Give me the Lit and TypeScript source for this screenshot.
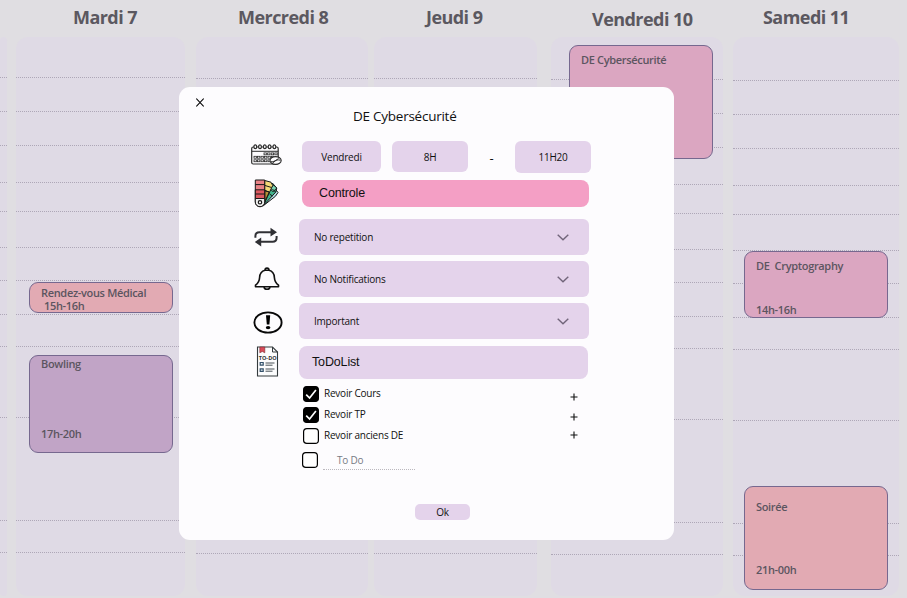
import { LitElement, html, css, svg } from "lit";
import { customElement, property } from "lit/decorators.js";
import { classMap } from "lit/directives/class-map.js";
import { styleMap } from "lit/directives/style-map.js";

interface CalEvent {
  title: string;
  hours: string;
  tone: string;
  left: number;
  top: number;
  height: number;
  titleGap: number;
  hoursGap: number;
  indent?: number;
}

interface Day {
  name: string;
  width: number;
  gap: number;
  shift: number;
  drop: number;
  offset: number;
  events: CalEvent[];
}

const LINES = [77, 111, 145, 182, 211, 247, 280, 314, 346, 417, 520, 552];

const DAYS: Day[] = [
  { name: "", width: 7, gap: 9, shift: 0, drop: 0, offset: 0, events: [] },
  {
    name: "Mardi 7", width: 169, gap: 11, shift: 57, drop: 0, offset: 0,
    events: [
      { title: "Rendez-vous Médical", hours: "15h-16h", tone: "rose", left: 13, top: 282, height: 31, titleGap: 3, hoursGap: 0, indent: 3 },
      { title: "Bowling", hours: "17h-20h", tone: "violet", left: 13, top: 355, height: 98, titleGap: 1, hoursGap: 57 },
    ],
  },
  { name: "Mercredi 8", width: 172, gap: 6, shift: 42, drop: 0, offset: 1, events: [] },
  { name: "Jeudi 9", width: 163, gap: 14, shift: 52, drop: 0, offset: 1, events: [] },
  {
    name: "Vendredi 10", width: 172, gap: 10, shift: 41, drop: 2, offset: 2,
    events: [{ title: "DE Cybersécurité", hours: "", tone: "pink", left: 18, top: 45, height: 114, titleGap: 7, hoursGap: 0 }],
  },
  {
    name: "Samedi 11", width: 166, gap: 8, shift: 30, drop: 0, offset: 3,
    events: [
      { title: "DE  Cryptography", hours: "14h-16h", tone: "pink", left: 11, top: 251, height: 67, titleGap: 7, hoursGap: 31 },
      { title: "Soirée", hours: "21h-00h", tone: "rose", left: 11, top: 486, height: 104, titleGap: 13, hoursGap: 50 },
    ],
  },
];

@customElement("day-column")
class DayColumn extends LitElement {
  @property({ attribute: false }) day!: Day;

  static styles = css`
    :host { display: block; flex: none; position: relative; height: 598px; }
    .name {
      height: 37px; box-sizing: border-box; white-space: nowrap;
      font: 700 18px/24px "Open Sans", sans-serif; letter-spacing: -.55px; color: #5b5860;
    }
    .track { height: 559px; border-radius: 12px; background: #dfdae5; overflow: hidden; }
    .slot { box-sizing: border-box; border-bottom: 1px dotted #aea7b7; }
    .event {
      position: absolute; box-sizing: border-box; width: 144px; display: flex; flex-direction: column;
      border: 1px solid #76688f; border-radius: 9px; padding-left: 11px;
      font: 600 11px/13px "Open Sans", sans-serif; letter-spacing: -.33px; color: #5b5560;
    }
    .line { white-space: pre; }
    .rose { background: #e2aab3; }
    .violet { background: #c1a4c6; }
    .pink { background: #dba6c1; }
  `;

  render() {
    const d = this.day;
    let prev = 37;
    return html`
      <div class="name" style=${styleMap({ paddingLeft: d.shift + "px", paddingTop: 5 + d.drop + "px" })}>${d.name}</div>
      <div class="track">
        ${LINES.map((y) => {
          const bottom = y + d.offset + 1;
          const h = bottom - prev;
          prev = bottom;
          return html`<div class="slot" style=${styleMap({ height: h + "px" })}></div>`;
        })}
      </div>
      ${d.events.map((e) => html`
        <div class=${classMap({ event: true, [e.tone]: true })}
          style=${styleMap({ top: e.top + "px", height: e.height + "px", left: e.left + "px" })}>
          <div class="line" style=${styleMap({ marginTop: e.titleGap + "px" })}>${e.title}</div>
          <div class="line" style=${styleMap({ marginTop: e.hoursGap + "px", paddingLeft: (e.indent ?? 0) + "px" })}>${e.hours}</div>
        </div>`)}
    `;
  }
}

const chevron = html`<svg class="chevron" width="12" height="7" viewBox="0 0 12 7"><path d="M.7.8 6 5.8 11.3.8" fill="none" stroke="#71657a" stroke-width="1.4"/></svg>`;

const calendarIcon = html`<svg width="32" height="22" viewBox="0 0 32 22" fill="none" stroke="#2c2c2c">
  <rect x="0.700" y="3" width="26.500" height="17" rx="1.500" stroke-width="1.200"/>
  <path d="M1 7.300H27" stroke-width="1"/>
  ${[4.3, 9, 13.8, 18.6, 23.4].map((x) => svg`<ellipse cx=${x} cy="2.700" rx="1.400" ry="1.900" fill="#fdfcfe" stroke-width="1.200"/>`)}
  ${[13, 16.6, 20.2, 23.8].map((x) => svg`<rect x=${x} y="8.900" width="2.400" height="1.900" stroke-width=".8"/>`)}
  ${[3, 6.5, 10, 13.5, 17, 20.5].map((x) => svg`<rect x=${x} y="12.300" width="2.400" height="1.900" stroke-width=".8"/>`)}
  ${[3, 6.5, 10, 13.5, 17].map((x) => svg`<rect x=${x} y="15.800" width="2.400" height="1.900" stroke-width=".8"/>`)}
  <ellipse cx="24.600" cy="16.500" rx="5.600" ry="3.900" fill="#fdfcfe" stroke-width="1.100"/>
  <path d="M20 17.600c3 1.200 4-2.800 9.500-1.400M21.600 19l6-4.600" stroke-width="1"/>
</svg>`;

const paletteIcon = html`<svg width="26" height="29" viewBox="0 0 26 29" stroke="#171717" stroke-width="1" stroke-linejoin="round">
  <path d="M7 24 21.500 10.300l2.500 3.200-2.600 3.800L9 27z" fill="#b5dfe6"/>
  <path d="M7 22 18.300 4l4.500 5-1 4L9 27z" fill="#42b58d"/>
  <path d="M19.500 6l3.300 3-3.800 3.800-2.600-2.900z" fill="#79d3b0"/>
  <path d="M10.700 1.500 17 3.200 18.700 6.500 10.500 24z" fill="#f4d977"/>
  <path d="M10.700 11.500 15.300 13 10.600 23z" fill="#b89235"/>
  <path d="M10.700 6.400l6.500 2M10.700 11.500l4.600 1.600M18.400 10l3 3M15.500 15l3 2" fill="none"/>
  <path d="M1.300 1h9.400v22a4.700 4.700 0 0 1-9.400 0z" fill="#e98286"/>
  <path d="M1.300 10.800h9.400v9H1.300z" fill="#dc5960"/>
  <path d="M1.300 5.600h9.400M1.300 15h9.400" fill="none"/>
  <path d="M1.300 19.500h9.400V23a4.700 4.700 0 0 1-9.400 0z" fill="#eee"/>
  <circle cx="6" cy="23.300" r="1.700" fill="#fff" stroke-width="1.200"/>
</svg>`;

const repeatIcon = html`<svg width="24" height="20" viewBox="0 0 24 20" fill="none" stroke="#303035" stroke-width="2">
  <path d="M1.400 10.800V9c0-2.500 1.500-3.800 4-3.800H17M22.600 9v1.800c0 2.500-1.500 4-4 4H7"/>
  <path d="M16.500 .8 23 5.200l-6.500 4.200zM7.200 10.400.8 15l6.400 4.400z" fill="#303035" stroke="none"/>
</svg>`;

const bellIcon = html`<svg width="26" height="24" viewBox="0 0 26 24" fill="none" stroke="#111" stroke-width="1.600" stroke-linejoin="round">
  <path d="M11 3.300C11 .4 15 .4 15 3.300c3.400.8 5.200 3.700 5.400 7.300.3 4.200 1.600 5.800 4.100 7.600v1.600H1.500v-1.600c2.500-1.800 3.800-3.400 4.100-7.600.2-3.600 2-6.500 5.400-7.300z"/>
  <path d="M11 3.300h4M10 20c.5 3 5.500 3 6 0"/>
</svg>`;

const alertIcon = html`<svg width="30" height="23" viewBox="0 0 30 23">
  <ellipse cx="15" cy="11.500" rx="13.600" ry="10.100" fill="none" stroke="#080808" stroke-width="1.900"/>
  <path d="M13 4.200h4.200l-.8 9.300h-2.600z"/><ellipse cx="15.100" cy="16.600" rx="2.300" ry="1.700"/>
</svg>`;

const todoIcon = html`<svg width="24" height="32" viewBox="0 0 24 32">
  <path d="M1.500 1h15l5 5v24H1.500z" fill="#fcfcfd" stroke="#343a3d" stroke-width="1.100"/>
  <path d="M16.500 1v5h5" fill="none" stroke="#343a3d"/>
  <path d="M3.800 1h5v5.800L6.300 5.500 3.800 6.800z" fill="#d94b59" stroke="#7b2b34" stroke-width=".6"/>
  <text class="todo-label" x="11.700" y="14.200" text-anchor="middle">TO-DO</text>
  <path d="M4.200 16.500h3v2.600h-3zM4.200 22.800h3v2.600h-3z" fill="#e8eff5" stroke="#33506a" stroke-width="1.200"/>
  <path d="M9.500 17h9M9.500 19.200h7M9.500 23h9M9.500 25.200h7" stroke="#485056" stroke-width="1"/>
</svg>`;

@customElement("check-box")
class CheckBox extends LitElement {
  @property({ type: Boolean }) checked = false;
  static styles = css`
    :host { display: block; flex: none; width: 16px; height: 16px; }
    .box { display: block; }
  `;
  render() {
    return html`<svg class="box" width="16" height="16" viewBox="0 0 16 16">
      <rect x=".6" y=".6" width="14.800" height="14.800" rx="3.200" fill=${this.checked ? "#000" : "#fff"} stroke="#000" stroke-width="1.200"/>
      ${this.checked ? svg`<path d="M3.200 8.600 6.600 12 12.900 4" fill="none" stroke="#fff" stroke-width="1.700"/>` : ""}
    </svg>`;
  }
}

@customElement("app-root")
class AppRoot extends LitElement {
  static styles = css`
    :host { display: block; position: relative; width: 907px; height: 598px; overflow: hidden; background: #e0dee2; }
    .week { display: flex; }
    .modal {
      position: absolute; left: 179px; top: 87px; width: 495px; height: 453px; box-sizing: border-box;
      background: #fdfcfe; border-radius: 11px; color: #111;
      font: 400 10px/14px "Open Sans", sans-serif; letter-spacing: -.22px;
    }
    .header { display: flex; height: 54px; }
    .close { flex: none; margin: 11px 0 0 17px; }
    .title { margin: 19px 0 0 149px; font-size: 13.500px; line-height: 20px; letter-spacing: -.25px; white-space: nowrap; }
    .row { display: flex; }
    .icon { flex: none; width: 120px; display: flex; align-items: center; padding-left: 72px; box-sizing: border-box; }
    .icon svg { display: block; flex: none; overflow: visible; }
    .field { box-sizing: border-box; background: #e4d3eb; border-radius: 6px; display: flex; align-items: center; }
    .when { height: 39px; align-items: flex-start; }
    .when .icon { height: 28px; width: 123px; }
    .chip { justify-content: center; height: 31px; }
    .day { width: 79px; margin-right: 11px; }
    .start { width: 76px; }
    .end { width: 76px; height: 32px; }
    .dash { width: 47px; text-align: center; line-height: 32px; font-size: 13px; padding-top: 1px; box-sizing: border-box; }
    .kind { height: 27px; margin-bottom: 12px; }
    .kind .icon { width: 123px; padding-left: 75px; }
    .kind .field { width: 287px; background: #f49fc5; border-radius: 8px; padding: 0 0 2px 17px; }
    .arial { font: 12.500px/16px "Liberation Sans", sans-serif; letter-spacing: -.15px; }
    .option { height: 36px; margin-bottom: 6px; }
    .option .icon { padding-left: 75px; }
    .option .field { width: 290px; justify-content: space-between; padding: 0 20px 0 15px; }
    .alert .icon { padding: 3px 0 0 73.500px; }
    .tasks { height: 33px; }
    .tasks .icon { padding: 0 0 2px 77px; }
    .tasks .field { width: 289px; border-radius: 8px; padding: 0 0 1px 13px; }
    .list { display: flex; justify-content: space-between; padding: 7px 95px 0 123px; height: 118px; }
    .item { display: flex; gap: 5px; height: 21px; }
    .item check-box { margin-left: 1px; }
    .draft { display: flex; margin-top: 3px; height: 18px; }
    .draft-input { margin-left: 5px; width: 92px; border-bottom: 1px dotted #bbb8be; padding-left: 14px; box-sizing: border-box; color: #777b84; padding-top: 1px; }
    .adds { display: flex; flex-direction: column; width: 9px; padding-top: 7px; }
    .adds svg { display: block; margin-bottom: 12px; }
    .adds svg:nth-of-type(2) { margin-bottom: 10px; }
    .ok { width: 55px; height: 16px; margin-left: 236px; border-radius: 5px; justify-content: center; }
    .todo-label { font: 700 5.500px "Open Sans", sans-serif; letter-spacing: 0; fill: #333; }
    .lower { padding-top: 1px; }
  `;

  render() {
    const plus = html`<svg width="8" height="8" viewBox="0 0 8 8"><path d="M4 .5v7M.5 4h7" stroke="#111" stroke-width="1.100"/></svg>`;
    const option = (icon: unknown, label: string, alert = false) => html`
      <div class=${classMap({ row: true, option: true, alert })}><div class="icon">${icon}</div><div class="field"><span>${label}</span>${chevron}</div></div>`;
    const item = (label: string, checked: boolean) => html`
      <div class="item"><check-box ?checked=${checked}></check-box><span>${label}</span></div>`;
    return html`
      <div class="week">
        ${DAYS.map((d) => html`<day-column .day=${d} style=${styleMap({ width: d.width + "px", marginRight: d.gap + "px" })}></day-column>`)}
      </div>
      <div class="modal">
        <div class="header">
          <svg class="close" width="8" height="9" viewBox="0 0 8 9"><path d="M.3.5l7.400 8M7.700.5l-7.400 8" stroke="#000" stroke-width="1.100"/></svg>
          <div class="title">DE Cybersécurité</div>
        </div>
        <div class="row when">
          <div class="icon">${calendarIcon}</div>
          <div class="field chip day">Vendredi</div>
          <div class="field chip start">8H</div>
          <div class="dash">-</div>
          <div class="field chip end">11H20</div>
        </div>
        <div class="row kind"><div class="icon">${paletteIcon}</div><div class="field arial">Controle</div></div>
        ${option(repeatIcon, "No repetition")}
        ${option(bellIcon, "No Notifications")}
        ${option(alertIcon, "Important", true)}
        <div class="lower">
          <div class="row tasks"><div class="icon">${todoIcon}</div><div class="field arial">ToDoList</div></div>
          <div class="list">
            <div>
              ${item("Revoir Cours", true)}${item("Revoir TP", true)}${item("Revoir anciens DE", false)}
              <div class="draft"><check-box></check-box><div class="draft-input">To Do</div></div>
            </div>
            <div class="adds">${plus}${plus}${plus}</div>
          </div>
          <div class="field ok">Ok</div>
        </div>
      </div>
    `;
  }
}
